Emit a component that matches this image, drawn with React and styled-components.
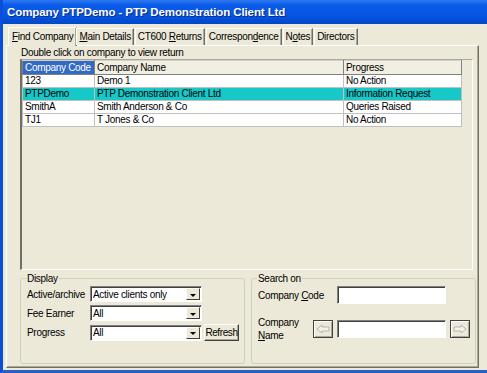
import React from 'react';
import styled, { createGlobalStyle } from 'styled-components';

const Global = createGlobalStyle`
  body {
    margin: 0;
    background: #ece9d8;
    font-family: "Liberation Sans", Arial, sans-serif;
    font-size: 10px;
    letter-spacing: -0.3px;
    color: #000;
  }
`;

const Window = styled.div`
  width: 487px;
  height: 373px;
  box-sizing: border-box;
  background: #ece9d8;
  border-left: 3px solid #0a4fd8;
  border-bottom: 3px solid #2a5fc8;
  display: flex;
  flex-direction: column;
  overflow: hidden;
`;

const TitleBar = styled.div`
  height: 24px;
  flex-shrink: 0;
  background: linear-gradient(to bottom, #2f7af0 0%, #0a5ce8 20%, #0453e0 70%, #0347c8 100%);
  color: #fff;
  font-weight: bold;
  font-size: 11.5px;
  letter-spacing: -0.1px;
  display: flex;
  align-items: center;
  padding-left: 7px;
  margin-left: -3px;
  text-shadow: 1px 1px 0 #0a2a8a;
`;

const Body = styled.div`
  flex: 1;
  display: flex;
  flex-direction: column;
  padding: 2px 8px 2px 3px;
`;

const TabStrip = styled.div`
  display: flex;
  align-items: flex-end;
  height: 19px;
  padding-left: 2px;
  position: relative;
  z-index: 1;
`;

const Tab = styled.div`
  height: ${p => (p.$active ? 19 : 17)}px;
  line-height: ${p => (p.$active ? 17 : 16)}px;
  box-sizing: border-box;
  padding: 0 ${p => (p.$active ? 3 : 2)}px;
  margin: 0 ${p => (p.$active ? -1 : 1)}px ${p => (p.$active ? -1 : 0)}px 0;
  background: #ece9d8;
  border-top: 1px solid #fff;
  border-left: 1px solid #fff;
  border-right: 1px solid #716f64;
  box-shadow: inset -1px 0 0 #aca899;
  white-space: pre;
`;

const U = styled.span`
  text-decoration: underline;
`;

const Panel = styled.div`
  flex: 1;
  border-top: 1px solid #fff;
  border-left: 1px solid #fff;
  border-right: 1px solid #716f64;
  border-bottom: 1px solid #716f64;
  box-shadow: inset -1px -1px 0 #aca899;
  padding: 1px 5px 3px 13px;
  display: flex;
  flex-direction: column;
`;

const Hint = styled.div`
  height: 12px;
  line-height: 12px;
  margin-left: 1px;
`;

const ListView = styled.div`
  height: 211px;
  box-sizing: border-box;
  border-top: 1px solid #aca899;
  border-left: 2px solid #716f64;
  border-right: 1px solid #fff;
  border-bottom: 1px solid #fff;
  background: #ece9d8;
  padding: 0 1px 1px 0;
`;

const Table = styled.table`
  border-collapse: collapse;
  table-layout: fixed;
  width: 439px;
`;

const Th = styled.th`
  font-weight: normal;
  text-align: left;
  height: 13px;
  padding: 0 2px;
  line-height: 12px;
  background: ${p => (p.$sel ? '#316ac5' : '#f1efe2')};
  color: ${p => (p.$sel ? '#fff' : '#000')};
  border: 1px solid #808080;
  border-top-color: #d4d0c8;
  white-space: nowrap;
  overflow: hidden;
`;

const Td = styled.td`
  height: 12px;
  line-height: 12px;
  padding: 0 2px;
  background: ${p => (p.$hl ? '#16c8c8' : '#fff')};
  border: 1px solid #c0c0c0;
  white-space: nowrap;
  overflow: hidden;
`;

const Bottom = styled.div`
  display: grid;
  grid-template-columns: 221px 222px;
  gap: 10px;
  margin-top: 3px;
`;

const Group = styled.fieldset`
  margin: 0;
  height: 91px;
  box-sizing: border-box;
  border: 1px solid #d0d0bf;
  border-radius: 3px;
  padding: 2px 5px 0 6px;
`;

const Legend = styled.legend`
  padding: 0 1px;
  margin-left: -1px;
  color: #000;
`;

const FormGrid = styled.div`
  display: grid;
  grid-template-columns: 63px 112px auto;
  row-gap: 3px;
  align-items: center;
`;

const Label = styled.div`
  line-height: 13px;
  white-space: nowrap;
`;

const Combo = styled.div`
  height: 16px;
  box-sizing: border-box;
  background: #fff;
  border-top: 1px solid #808080;
  border-left: 1px solid #808080;
  border-right: 1px solid #fff;
  border-bottom: 1px solid #fff;
  box-shadow: inset 1px 1px 0 #404040;
  display: flex;
  align-items: center;
  padding-left: 2px;
`;

const ComboText = styled.span`
  flex: 1;
  white-space: nowrap;
`;

const DropBtn = styled.div`
  width: 14px;
  height: 12px;
  margin-right: 1px;
  background: #ece9d8;
  border-top: 1px solid #fff;
  border-left: 1px solid #fff;
  border-right: 1px solid #404040;
  border-bottom: 1px solid #404040;
  box-sizing: border-box;
  display: flex;
  align-items: center;
  justify-content: center;
`;

const Arrow = styled.span`
  width: 0;
  height: 0;
  border-left: 3px solid transparent;
  border-right: 3px solid transparent;
  border-top: 3px solid #000;
  margin-top: 2px;
`;

const PushButton = styled.button`
  font: inherit;
  letter-spacing: -0.4px;
  height: 17px;
  width: 35px;
  padding: 0;
  margin-left: 2px;
  background: #ece9d8;
  border-top: 1px solid #fff;
  border-left: 1px solid #fff;
  border-right: 1px solid #404040;
  border-bottom: 1px solid #404040;
  box-shadow: inset -1px -1px 0 #aca899;
  color: #000;
`;

const SearchGrid = styled.div`
  display: grid;
  grid-template-columns: 55px 24px 109px auto;
  row-gap: 12px;
  align-items: center;
`;

const TextBox = styled.div`
  height: 18px;
  box-sizing: border-box;
  background: #fff;
  border-top: 1px solid #808080;
  border-left: 1px solid #808080;
  border-right: 1px solid #fff;
  border-bottom: 1px solid #fff;
  box-shadow: inset 1px 1px 0 #404040;
  grid-column: ${p => p.$col || 'auto'};
`;

const IconBtn = styled.div`
  width: 20px;
  height: 18px;
  box-sizing: border-box;
  background: #ece9d8;
  border: 1px solid #404040;
  box-shadow: inset 1px 1px 0 #fff, inset -1px -1px 0 #aca899;
  display: flex;
  align-items: center;
  justify-content: center;
  margin-left: ${p => p.$ml || 0}px;
`;

function ArrowIcon({ flip }) {
  return (
    <svg width="14" height="10" viewBox="0 0 14 10" style={{ transform: flip ? 'scaleX(-1)' : 'none' }}>
      <path d="M1 5 L6 1 L6 3 L13 3 L13 7 L6 7 L6 9 Z" fill="#f4f3ee" stroke="#b8b5a6" strokeWidth="1" />
    </svg>
  );
}

const rows = [
  ['123', 'Demo 1', 'No Action'],
  ['PTPDemo', 'PTP Demonstration Client Ltd', 'Information Request', true],
  ['SmithA', 'Smith Anderson & Co', 'Queries Raised'],
  ['TJ1', 'T Jones & Co', 'No Action'],
];

function Select({ value }) {
  return (
    <Combo>
      <ComboText>{value}</ComboText>
      <DropBtn><Arrow /></DropBtn>
    </Combo>
  );
}

export default function App() {
  return (
    <>
      <Global />
      <Window>
        <TitleBar>Company PTPDemo - PTP Demonstration Client Ltd</TitleBar>
        <Body>
          <TabStrip>
            <Tab $active><U>F</U>ind Company</Tab>
            <Tab><U>M</U>ain Details</Tab>
            <Tab>CT600 <U>R</U>eturns</Tab>
            <Tab>Correspon<U>d</U>ence</Tab>
            <Tab>N<U>o</U>tes</Tab>
            <Tab>Directors</Tab>
          </TabStrip>
          <Panel>
            <Hint>Double click on company to view return</Hint>
            <ListView>
              <Table>
                <colgroup>
                  <col style={{ width: 72 }} />
                  <col style={{ width: 249 }} />
                  <col style={{ width: 118 }} />
                </colgroup>
                <thead>
                  <tr>
                    <Th $sel>Company Code</Th>
                    <Th>Company Name</Th>
                    <Th>Progress</Th>
                  </tr>
                </thead>
                <tbody>
                  {rows.map(r => (
                    <tr key={r[0]}>
                      <Td $hl={r[3]}>{r[0]}</Td>
                      <Td $hl={r[3]}>{r[1]}</Td>
                      <Td $hl={r[3]}>{r[2]}</Td>
                    </tr>
                  ))}
                </tbody>
              </Table>
            </ListView>
            <Bottom>
              <Group>
                <Legend>Display</Legend>
                <FormGrid>
                  <Label>Active/archive</Label>
                  <Select value="Active clients only" />
                  <span />
                  <Label>Fee Earner</Label>
                  <Select value="All" />
                  <span />
                  <Label>Progress</Label>
                  <Select value="All" />
                  <PushButton>Refresh</PushButton>
                </FormGrid>
              </Group>
              <Group>
                <Legend>Search on</Legend>
                <SearchGrid>
                  <Label style={{ gridColumn: '1 / 3' }}>Company <U>C</U>ode</Label>
                  <TextBox $col="3" />
                  <span />
                  <Label>Company<br /><U>N</U>ame</Label>
                  <IconBtn><ArrowIcon /></IconBtn>
                  <TextBox />
                  <IconBtn $ml={4}><ArrowIcon flip /></IconBtn>
                </SearchGrid>
              </Group>
            </Bottom>
          </Panel>
        </Body>
      </Window>
    </>
  );
}
